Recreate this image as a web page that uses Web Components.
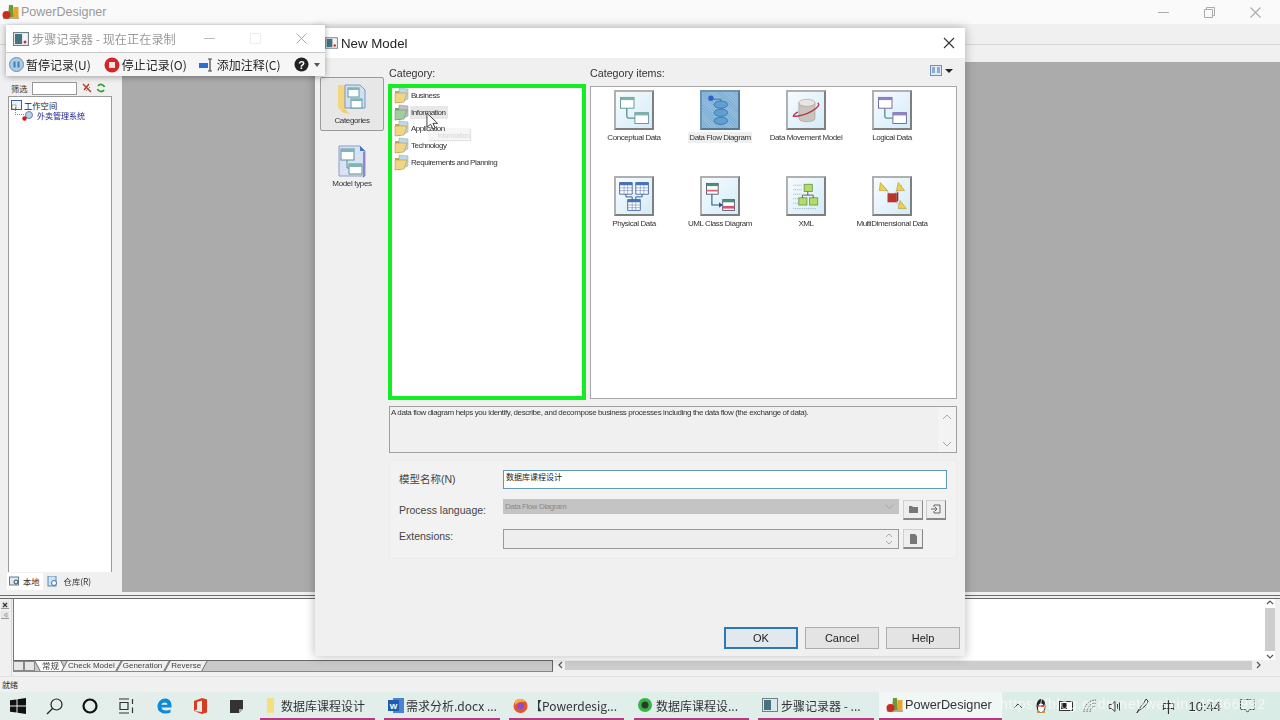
<!DOCTYPE html>
<html lang="zh"><head><meta charset="utf-8"><title>PowerDesigner</title>
<style>
html,body{margin:0;padding:0;width:1280px;height:720px;overflow:hidden;background:#f0f0f0}
body{font-family:"Liberation Sans","Noto Sans CJK SC",sans-serif;color:#222}
</style></head><body>
<x-app>
  <x-recorder slot="windows"></x-recorder>
  <x-dialog slot="windows"></x-dialog>
</x-app>
<script>
const PD=`<svg width="18" height="16" viewBox="0 0 18 16"><path d="M7 1h4l1 12H6z" fill="#6c9a3a"/><rect x="11.500" y="3" width="5" height="10" fill="#e8a52a"/><circle cx="4.500" cy="11" r="4" fill="#cf2a22"/><path d="M1 14h16" stroke="#8a5a2a"/></svg>`;
const REC=`<svg width="16" height="14" viewBox="0 0 16 14"><rect x=".5" y=".5" width="15" height="13" fill="#dfe6ea" stroke="#6f8088"/><rect x="2" y="2" width="7" height="10" fill="#47737f"/><rect x="10" y="2" width="4" height="10" fill="#f4f6f7"/><circle cx="12" cy="10" r="1.500" fill="#c9303a"/></svg>`;
const FOLDER=`<svg width="15" height="17" viewBox="0 0 15 17"><path d="M1 4h4l1 1v11H2a1 1 0 0 1-1-1z" fill="#c9a94f"/><path d="M5 1l9 1v10l-9 4z" fill="#bcd8ea" stroke="#8aa0ad" stroke-width=".5"/><path d="M1 6l12 0-3 9-9 1z" fill="#f0d684" stroke="#b79a45" stroke-width=".6"/></svg>`;

function def(name,css,html){
  customElements.define(name,class extends HTMLElement{
    constructor(){super();const r=this.attachShadow({mode:'open'});
      r.innerHTML=`<style>${css}</style>${typeof html==='function'?html(this):html}`;}
  });
}

/* ---------- model tile ---------- */
const TILES={
 concept:`<rect x="5" y="6" width="15" height="12" fill="#fff" stroke="#5f8f93"/><rect x="5" y="6" width="15" height="3" fill="#79b6a8"/><rect x="21" y="23" width="15" height="12" fill="#fff" stroke="#5f8f93"/><rect x="21" y="23" width="15" height="3" fill="#79b6a8"/><path d="M12 18v9q0 2 2 2h7" fill="none" stroke="#5f8f93" stroke-width="1.500"/>`,
 flow:`<circle cx="10" cy="7" r="3" fill="#2f62c9"/><path d="M13 8h8M21 8v5M21 18v5M21 28v3" stroke="#3b6d99"/><ellipse cx="21" cy="14" rx="7.500" ry="4" fill="#5f9fd4" stroke="#3a76a8"/><ellipse cx="21" cy="23" rx="7.500" ry="4" fill="#5f9fd4" stroke="#3a76a8"/><ellipse cx="21" cy="32" rx="7.500" ry="4" fill="#5f9fd4" stroke="#3a76a8"/>`,
 move:`<path d="M12 12v17q0 4 9 4t9-4V12z" fill="#c9c4bd" stroke="#8c8782" stroke-width=".5"/><ellipse cx="21" cy="12" rx="9" ry="4" fill="#e8e6e2" stroke="#8c8782" stroke-width=".5"/><path d="M33 12q4 3-6 9T6 27q0-2 5-5" fill="none" stroke="#b8384c" stroke-width="1.500"/>`,
 logical:`<rect x="5" y="6" width="15" height="12" fill="#fff" stroke="#6a5fa3"/><rect x="5" y="6" width="15" height="3" fill="#8f81c9"/><rect x="21" y="23" width="15" height="12" fill="#fff" stroke="#6a5fa3"/><rect x="21" y="23" width="15" height="3" fill="#8f81c9"/><path d="M12 18v9q0 2 2 2h7" fill="none" stroke="#5f8f93" stroke-width="1.500"/>`,
 physical:`<g fill="#fff" stroke="#44639e"><path d="M4 5h14v13H4zM22 5h14v13H22zM13 24h14v12H13z"/><path d="M4 11h14M4 14h14M9 8v10M13 8v10M22 11h14M22 14h14M27 8v10M31 8v10M13 30h14M13 33h14M18 27v9M22 27v9" stroke-width=".5"/></g><path d="M4 5h14v3H4zM22 5h14v3H22zM13 24h14v3H13z" fill="#4b72b4"/><path d="M11 18v3h7v3M29 18v3h-7v3" fill="none" stroke="#2d4f83"/>`,
 uml:`<rect x="5" y="6" width="13" height="12" fill="#fff" stroke="#556"/><rect x="5" y="6" width="13" height="3" fill="#4a8f77"/><rect x="5" y="13" width="13" height="2" fill="#e0666a"/><rect x="23" y="24" width="13" height="12" fill="#fff" stroke="#556"/><rect x="23" y="24" width="13" height="3" fill="#4a8f77"/><rect x="23" y="31" width="13" height="3" fill="#d9506a"/><path d="M11 18v12h11" fill="none" stroke="#1e5a8a" stroke-width="1.200"/><path d="M19 27l4 3-4 3z" fill="#1e5a8a"/>`,
 xml:`<g stroke="#9aa" stroke-width="1" stroke-dasharray="1 1"><path d="M6 8h9M6 13h9M6 18h9M6 23h5M6 28h5M6 34h25"/></g><g fill="#b5dc6a" stroke="#6f9c47"><rect x="18" y="7" width="9" height="8"/><rect x="12" y="22" width="9" height="8"/><rect x="24" y="22" width="9" height="8"/></g><path d="M22 15v4M16 22v-3h12v3" fill="none" stroke="#555"/>`,
 multi:`<path d="M9 8l11 13L31 8M20 21l11 12" stroke="#d8c8c4" stroke-width="1.500" fill="none"/><path d="M7 5l8 9H6zM27 5l7 9h-9zM29 25l7 9h-9z" fill="#f0cf4a" stroke="#a88d2c" stroke-width=".6"/><rect x="15" y="17" width="10" height="10" fill="#b8342c"/><path d="M25 17l2-2v10l-2 2z" fill="#8c2a24"/>`
};
def('x-model-tile',`
:host{display:flex;flex-direction:column;align-items:center;width:86px;height:86px;box-sizing:border-box;padding-top:3px;font:8px "Liberation Sans",sans-serif;letter-spacing:-.42px;color:#333}
.ic{width:40px;height:40px;box-sizing:border-box;border:2px solid;border-color:#b0b0b0 #7f7f7f #7f7f7f #b0b0b0;background:linear-gradient(135deg,#f7fcfe,#d4ebf8);flex:none}
:host([selected]) .ic{background:repeating-linear-gradient(45deg,#7fb0d6 0 1px,#93bddd 1px 2px);border-color:#6d93b3 #56799a #56799a #6d93b3}
svg{display:block;width:36px;height:36px}
.t{margin-top:2px;padding:0 1px;white-space:nowrap;height:11px;line-height:11px}
:host([selected]) .t{background:#efefef}
`,el=>`<div class="ic"><svg viewBox="0 0 40 40">${TILES[el.getAttribute('icon')]}</svg></div><div class="t"><slot></slot></div>`);

/* ---------- category row ---------- */
def('x-cat-row',`
:host{display:flex;align-items:center;position:relative;height:16.700px;font:8px "Liberation Sans",sans-serif;letter-spacing:-.5px;color:#333;gap:1px}
.lb{padding:2px 1px;white-space:nowrap}
svg{display:block;flex:none}
:host([hover]) .lb{background:#e8e8e8;padding-right:2px}
:host([hover]) svg{filter:hue-rotate(60deg) saturate(.6) brightness(.9)}
`,`${FOLDER}<span class="lb"><slot></slot></span>`);

/* ---------- push button ---------- */
def('x-button',`
:host{display:inline-flex;align-items:center;justify-content:center;box-sizing:border-box;width:74px;height:22px;background:#e4e4e4;border:1px solid #adadad;font:11px "Liberation Sans",sans-serif;color:#222}
:host([primary]){border:2px solid #2d79b6;background:#e1e8ee}
`,`<slot></slot>`);

def('x-mini',`
:host{display:flex;align-items:center;justify-content:center;box-sizing:border-box;flex:none;width:20px;height:20px;background:#eee;border:1px solid #cfcfcf;border-right-color:#888;border-bottom:2px solid #888}
`,`<slot></slot>`);

/* ---------- dialog ---------- */
const FOLD_BIG=`<svg width="34" height="34" viewBox="0 0 34 34"><path d="M3 3h5l2 2v26l-5-3q-2-2-2-4z" fill="#f1d77f"/><path d="M10 3h15l5 5v18H10z" fill="#cfe0f2" stroke="#7f95c8"/><g fill="#fff" stroke="#5f9aa0"><rect x="13" y="6" width="11" height="9"/><rect x="16" y="17" width="11" height="9"/></g><path d="M13 6h11v2H13zM16 17h11v2H16z" fill="#7db8b0"/><path d="M9 26l6 6-9-2z" fill="#f0d070"/></svg>`;
const DOC_BIG=`<svg width="30" height="36" viewBox="0 0 30 36"><path d="M2 3h21l5 5v25H2z" fill="#d8e2f4" stroke="#8c9ccc"/><path d="M23 3l5 5h-5z" fill="#3c7ad0"/><path d="M28 8v25l-2 2V9z" fill="#8f88c4"/><g fill="#fff" stroke="#5f8f93"><rect x="4" y="6" width="13" height="11"/><rect x="12" y="21" width="13" height="10"/></g><path d="M4 6h13v3H4zM12 21h13v3H12z" fill="#7db8b0"/><path d="M10 17v8h2" stroke="#5f8f93" fill="none"/></svg>`;
def('x-dialog',`
:host{position:absolute;left:315px;top:28px;width:650px;height:628px;background:#f0f0f0;box-shadow:0 0 10px rgba(0,0,0,.28);display:flex;flex-direction:column;font:10.700px "Liberation Sans","Noto Sans CJK SC",sans-serif;color:#333}
.title{height:30px;background:#fff;display:flex;align-items:center;padding-left:10px;flex:none;font-size:13.300px;color:#222}
.title svg.ic{width:13px;height:12px}
.title .name{margin-left:3px}
.title svg.x{margin-left:auto;margin-right:10px}
.top{display:flex;height:334px;padding-top:8px;flex:none}
.side{width:64px;margin-left:5px;flex:none;display:flex;flex-direction:column;gap:11px;padding-top:11px;font:8px "Liberation Sans",sans-serif;letter-spacing:-.35px;color:#333}
.tab{display:flex;flex-direction:column;align-items:center;box-sizing:border-box;height:54px}
.tab.on{background:#e7e7e7;border:1px solid #9a9a9a;border-radius:2px;padding-top:4px}
.tab.off{height:46px;padding-top:1px}
.col1{width:198px;margin-left:4px;flex:none;display:flex;flex-direction:column}
.col1 .lab{padding-left:1px}
.col2{width:367px;margin-left:4px;flex:none;display:flex;flex-direction:column}
.lab{height:18px;line-height:14px;display:flex;align-items:flex-start;justify-content:space-between}
.cats{box-sizing:border-box;height:316px;border:4px solid #12ee22;background:#fff;padding:0 0 0 2px;position:relative}
.rows{margin-top:-1px}
.items{box-sizing:border-box;height:313px;margin-top:2px;border:1px solid #a8a8a8;background:#fff;display:grid;grid-template-columns:repeat(4,86px);grid-auto-rows:86px;align-content:start}
.tip{position:absolute;left:36px;top:40px;width:42px;height:12px;box-sizing:border-box;padding-top:4px;text-align:right;font:6.500px "Liberation Sans",sans-serif;color:#d4d4d4;background:#f6f6f6;box-shadow:1px 1px 1px #e2e2e2}
.cursor{position:absolute;left:34px;top:24px}
.view{display:flex;align-items:center;gap:3px;margin-right:4px;margin-top:-1px}
.caret{width:0;height:0;border:4px solid transparent;border-top:4px solid #222;border-bottom:0}
.desc{margin:6px 8px 0 74px;height:47px;box-sizing:border-box;border:1px solid #a0a0a0;display:flex;justify-content:space-between;font:8px "Liberation Sans",sans-serif;letter-spacing:-.39px;color:#333;padding:1px 0 0 1px;flex:none}
.sb{width:18px;margin-top:-1px;display:flex;flex-direction:column;justify-content:space-between;align-items:center;padding:7px 0 5px;background:#f3f3f3}
.form{margin:7px 8px 0 74px;height:99px;box-sizing:border-box;background:#f2f2f2;border:1px solid #ececec;padding:9px 9px 0 9px;display:flex;flex-direction:column;flex:none}
.row{display:flex;align-items:center}
.row label{width:104px;flex:none;font-size:10.500px;color:#444}
.input{box-sizing:border-box;width:445px;height:19px;border:1px solid #5d9ab8;background:#fff;font:8px "Liberation Sans","Noto Sans CJK SC",sans-serif;color:#222;padding:1px 2px;line-height:11px}
.sel{box-sizing:border-box;width:396px;height:15px;margin-bottom:7px;background:#c4c4c4;font:8px "Liberation Sans",sans-serif;letter-spacing:-.42px;color:#8a8a8a;display:flex;align-items:center;justify-content:space-between;padding:0 5px 0 2px}
.ext{box-sizing:border-box;width:396px;height:20px;border:1px solid #9a9a9a;background:#eee;display:flex;justify-content:flex-end;align-items:center;padding-right:5px}
.foot{display:flex;justify-content:flex-end;gap:7px;padding-right:5px;margin-top:auto;margin-bottom:7px}
`,`
<div class="title">${REC.replace('<svg ','<svg class="ic" ')}<span class="name">New Model</span><svg class="x" width="12" height="12" viewBox="0 0 12 12"><path d="M1 1l10 10M11 1L1 11" stroke="#333" stroke-width="1.100"/></svg></div>
<div class="top">
 <div class="side">
  <div class="tab on">${FOLD_BIG}<span>Categories</span></div>
  <div class="tab off">${DOC_BIG}<span>Model types</span></div>
 </div>
 <div class="col1"><div class="lab">Category:</div>
  <div class="cats">
   <div class="tip">Information</div>
   <div class="rows"><x-cat-row>Business</x-cat-row><x-cat-row hover>Information</x-cat-row><x-cat-row>Application</x-cat-row><x-cat-row>Technology</x-cat-row><x-cat-row>Requirements and Planning</x-cat-row></div>
   <svg class="cursor" width="13" height="19" viewBox="0 0 14 20"><path d="M1 1v15l4-3 2.500 5 2.500-1-2.500-5h5z" fill="#fff" stroke="#333"/></svg>
  </div></div>
 <div class="col2"><div class="lab"><span>Category items:</span><span class="view"><svg width="12" height="11" viewBox="0 0 12 11"><rect x=".5" y=".5" width="11" height="10" fill="#dfeaf6" stroke="#6d8fc0"/><path d="M2 3h3M2 5h3M2 7h3M7 3h3M7 5h3M7 7h3" stroke="#3f6fb0"/></svg><span class="caret"></span></span></div>
  <div class="items">
   <x-model-tile icon="concept">Conceptual Data</x-model-tile>
   <x-model-tile icon="flow" selected>Data Flow Diagram</x-model-tile>
   <x-model-tile icon="move">Data Movement Model</x-model-tile>
   <x-model-tile icon="logical">Logical Data</x-model-tile>
   <x-model-tile icon="physical">Physical Data</x-model-tile>
   <x-model-tile icon="uml">UML Class Diagram</x-model-tile>
   <x-model-tile icon="xml">XML</x-model-tile>
   <x-model-tile icon="multi">MultiDimensional Data</x-model-tile>
  </div></div>
</div>
<div class="desc"><span>A data flow diagram helps you identify, describe, and decompose business processes including the data flow (the exchange of data).</span>
 <span class="sb"><svg width="10" height="6" viewBox="0 0 10 6"><path d="M1 5l4-4 4 4" fill="none" stroke="#a8a8a8"/></svg><svg width="10" height="6" viewBox="0 0 10 6"><path d="M1 1l4 4 4-4" fill="none" stroke="#a8a8a8"/></svg></span></div>
<div class="form">
 <div class="row"><label style="margin-top:-2px">模型名称(N)</label><div class="input">数据库课程设计</div></div>
 <div class="row" style="margin-top:10px;height:21px"><label>Process language:</label><div class="sel"><span>Data Flow Diagram</span><svg width="9" height="5" viewBox="0 0 9 5"><path d="M.5 .5l4 4 4-4" fill="none" stroke="#a9a9a9"/></svg></div>
   <x-mini style="margin-left:4px"><svg width="9" height="8" viewBox="0 0 9 8"><path d="M0 1h3l1 1h5v6H0z" fill="#777"/></svg></x-mini>
   <x-mini style="margin-left:3px"><svg width="10" height="10" viewBox="0 0 10 10"><path d="M3 3V1h6v8H3V7M0 5h5M4 3l2 2-2 2" fill="none" stroke="#666"/></svg></x-mini></div>
 <div class="row" style="margin-top:9px"><label style="margin-top:-6px">Extensions:</label><div class="ext"><svg width="8" height="14" viewBox="0 0 8 14"><path d="M1 5l3-3 3 3M1 9l3 3 3-3" fill="none" stroke="#aaa"/></svg></div>
   <x-mini style="margin-left:4px"><svg width="9" height="10" viewBox="0 0 9 10"><path d="M1 0h5l2 2v8H1z" fill="#777"/></svg></x-mini></div>
</div>
<div class="foot"><x-button primary>OK</x-button><x-button>Cancel</x-button><x-button>Help</x-button></div>
`);

/* ---------- steps recorder ---------- */
def('x-recorder',`
:host{position:absolute;left:6px;top:25px;width:319px;height:51px;background:#fff;box-shadow:0 1px 6px rgba(0,0,0,.35);display:flex;flex-direction:column;font:12px "Noto Sans CJK SC","Liberation Sans",sans-serif;color:#222;z-index:2}
.t{height:28px;flex:none;display:flex;align-items:center;padding-left:7px;color:#9a9a9a;font-size:12.200px;border-bottom:1px solid #c8c8c8;box-sizing:border-box}
.t span{margin-left:3px}
.ctl{margin-left:auto;display:flex;align-items:center;gap:35px;padding-right:18px}
.b{flex:1;display:flex;align-items:center;padding-left:3px;background:#f6f6f6}
.i{display:flex;align-items:center;gap:2px;white-space:nowrap}
.caret{width:0;height:0;border:3.500px solid transparent;border-top:4px solid #555;border-bottom:0;margin-left:3px}
`,`
<div class="t">${REC}<span>步骤记录器 - 现在正在录制</span>
 <div class="ctl"><svg width="11" height="11"><path d="M0 5.500h11" stroke="#bbb"/></svg><svg width="11" height="11"><rect x=".5" y=".5" width="10" height="10" fill="none" stroke="#eee"/></svg><svg width="11" height="11"><path d="M.5 .5l10 10M10.500 .5l-10 10" stroke="#aaa"/></svg></div></div>
<div class="b">
 <span class="i"><svg width="15" height="15" viewBox="0 0 15 15"><circle cx="7.500" cy="7.500" r="7" fill="#a9cce8" stroke="#6f8fa8"/><path d="M5.500 4.500v6M9.500 4.500v6" stroke="#3f7fb5" stroke-width="2"/></svg>暂停记录(U)</span>
 <span class="i" style="margin-left:13px"><svg width="16" height="16" viewBox="0 0 16 16"><circle cx="8" cy="8" r="7.500" fill="#d3262a"/><rect x="5" y="5" width="6" height="6" fill="#f3e3e3"/></svg>停止记录(O)</span>
 <span class="i" style="margin-left:12px"><svg width="16" height="14" viewBox="0 0 16 14"><rect x="0" y="5" width="9" height="5" fill="#2c6fd0"/><path d="M11 1v12M9 1h4M9 13h4" stroke="#444" stroke-width="1.200" fill="none"/></svg>添加注释(C)</span>
 <span class="i" style="margin-left:13px"><svg width="15" height="15" viewBox="0 0 15 15"><circle cx="7.500" cy="7.500" r="7" fill="#222"/><text x="7.500" y="11.500" text-anchor="middle" font-size="11" font-weight="700" font-family="Liberation Sans" fill="#fff">?</text></svg><span class="caret"></span></span>
</div>`);

/* ---------- explorer ---------- */
def('x-explorer',`
:host{display:flex;flex-direction:column;width:122px;flex:none;background:#f0f0f0;box-sizing:border-box;padding:18px 10px 0 8px;font:8.300px "Noto Sans CJK SC","Liberation Sans",sans-serif;color:#333}
.f{display:flex;align-items:center;height:16px;gap:4px;padding-left:3px}
.f i{display:block;box-sizing:border-box;width:45px;height:13px;border:1px solid #999;background:#fff}
.tree{flex:1;background:#fff;border:1px solid #9a9a9a;border-bottom:0;padding:2px 0 0 2px}
.r{display:flex;align-items:center;height:11px;gap:2px;color:#222}
.r.c{margin-left:11px;gap:4px;color:#21218a;position:relative;font-size:8px}
.r.c::before{content:"";position:absolute;left:-7px;top:-3px;width:8px;height:7px;border:dotted #888;border-width:0 0 1px 1px}
.tabs{height:18px;display:flex;align-items:center;flex:none;margin-left:-1px;margin-bottom:2px}
.tb{display:flex;align-items:center;gap:3px;padding:0 3px 0 2px;height:17px}
.tb.on{background:#fff}
.tb.re{gap:6px;margin-left:2px}
`,`
<div class="f">筛选<i></i><svg style="margin-left:1px" width="10" height="10" viewBox="0 0 10 10"><path d="M1 1l8 8M7 1L2 7" stroke="#c23b2a" stroke-width="1.500"/><path d="M4 8l4-4" stroke="#888"/></svg><svg width="10" height="10" viewBox="0 0 10 10"><path d="M8.500 4A3.700 3.700 0 0 0 2 3M1.500 6A3.700 3.700 0 0 0 8 7" fill="none" stroke="#3a9a3a" stroke-width="1.800"/></svg></div>
<div class="tree">
 <div class="r"><svg width="11" height="10" viewBox="0 0 11 10"><rect x=".5" y=".5" width="10" height="9" fill="#eef4fb" stroke="#3560a8"/><rect x="1" y="5" width="4" height="4" fill="#fff" stroke="#555" stroke-width=".5"/></svg>工作空间</div>
 <div class="r c"><svg width="11" height="10" viewBox="0 0 11 10"><circle cx="7" cy="4" r="3.500" fill="#b7d2e8" stroke="#5f8aa8"/><circle cx="2.500" cy="7.500" r="2.200" fill="#d4151c"/></svg>外卖管理系统</div>
</div>
<div class="tabs"><span class="tb on"><svg width="11" height="10" viewBox="0 0 11 10"><rect x=".5" y="1" width="9" height="8" fill="#dcecf5" stroke="#5b7f97"/><circle cx="7" cy="6" r="2" fill="none" stroke="#444"/></svg>本地</span><span class="tb re"><svg width="11" height="11" viewBox="0 0 11 11"><rect x="1" y="0" width="8" height="10" fill="#cfe2f3" stroke="#5b8ab0"/><circle cx="7" cy="7" r="2.500" fill="#fff" stroke="#3f6f9a"/></svg>仓库(R)</span></div>
`);

/* ---------- titlebar ---------- */
def('x-titlebar',`
:host{display:flex;align-items:center;height:24px;flex:none;background:#fafafa;padding-left:2px;font:12.500px "Liberation Sans",sans-serif;color:#999}
span{margin-left:1px}
.c{margin-left:auto;display:flex;align-items:center;gap:35px;padding-right:19px}
`,`${PD}<span>PowerDesigner</span><div class="c"><svg width="11" height="11"><path d="M0 5.500h11" stroke="#aaa"/></svg><svg width="11" height="11"><path d="M.5 2.500h8v8h-8zM2.500 2.500v-2h8v8h-2" fill="none" stroke="#aaa"/></svg><svg width="11" height="11"><path d="M.5 .5l10 10M10.500 .5l-10 10" stroke="#aaa" stroke-width="1.100"/></svg></div>`);

/* ---------- output ---------- */
def('x-output',`
:host{display:flex;flex-direction:column;height:84px;flex:none;background:#f0f0f0;font:8px "Liberation Sans","Noto Sans CJK SC",sans-serif;color:#444}
.sash{height:7px;flex:none;border-bottom:1px solid #6a6a6a;position:relative;box-sizing:border-box}
.sash::before{content:"";position:absolute;left:0;right:0;top:3px;border-top:1px solid #6a6a6a}
.main{flex:1;display:flex;min-height:0}
.left{width:13px;flex:none;display:flex;flex-direction:column;align-items:center;padding-top:2px;gap:2px;box-sizing:border-box;border-right:1px solid #d8d8d8;margin-left:-1px}
.left i{display:flex;align-items:center;justify-content:center;width:8px;height:8px;background:#e6e6e6;border-bottom:1px solid #999;box-sizing:border-box}
.body{flex:1;display:flex;flex-direction:column;padding-right:5px;margin-left:1px}
.up{flex:1;display:flex;min-height:0}
.white{flex:1;background:#fff;border-left:1px solid #777}
.vs{width:10px;flex:none;background:#fff;display:flex;flex-direction:column;align-items:center;justify-content:space-between;padding:1px 0}
.vs b{display:block;flex:1;width:10px;margin:3px 0;background:#cdcdcd}
.down{height:16px;flex:none;display:flex;align-items:flex-start}
.tabs{width:540px;height:12px;flex:none;background:#c9c9c9;display:flex;align-items:center;border-top:1px solid #666;border-bottom:1px solid #888;box-sizing:border-box;border-right:1px solid #666}
.tabs s{display:block;width:11px;height:10px;background:#e6e6e6;border:1px solid #888;box-sizing:border-box;flex:none;text-decoration:none}
.tabs u{display:block;position:relative;text-decoration:none;height:10px;line-height:10px;padding:0 4px;white-space:nowrap;z-index:1}
.tabs u::before{content:"";position:absolute;inset:0;background:#f0f0f0;transform:skewX(-28deg);border-left:1px solid #666;border-right:1px solid #666;z-index:-1}
.tabs u.on::before{background:#fff;transform:skewX(28deg)}
.hs{flex:1;height:10px;background:#f0f0f0;display:flex;align-items:center}
.hs b{flex:1;height:9px;background:#cdcdcd;margin:0 4px 0 2px}
`,`
<div class="sash"></div>
<div class="main">
 <div class="left"><i><svg width="6" height="6" viewBox="0 0 6 6"><path d="M1 1l4 4M5 1L1 5" stroke="#333" stroke-width="1.200"/></svg></i><i><svg width="5" height="6" viewBox="0 0 5 6"><path d="M4 1L1 3l3 2z" fill="none" stroke="#999" stroke-width=".8"/></svg></i></div>
 <div class="body">
  <div class="up"><div class="white"></div><div class="vs"><svg width="8" height="5" viewBox="0 0 8 5"><path d="M1 4l3-3 3 3" fill="none" stroke="#555" stroke-width="1.200"/></svg><b></b><svg width="8" height="5" viewBox="0 0 8 5"><path d="M1 1l3 3 3-3" fill="none" stroke="#555" stroke-width="1.200"/></svg></div></div>
  <div class="down">
   <div class="tabs"><s></s><s></s><u class="on" style="margin-left:2px;font-size:8.500px;padding:0 5px">常规</u><u>Check Model</u><u style="margin-left:0">Generation</u><u style="margin-left:1px">Reverse</u></div>
   <div class="hs"><svg style="margin-left:5px" width="5" height="8" viewBox="0 0 5 8"><path d="M4 1L1 4l3 3" fill="none" stroke="#555" stroke-width="1.200"/></svg><b></b><svg style="margin-right:14px" width="5" height="8" viewBox="0 0 5 8"><path d="M1 1l3 3-3 3" fill="none" stroke="#555" stroke-width="1.200"/></svg></div>
  </div>
 </div>
</div>`);

/* ---------- taskbar ---------- */
def('x-task',`
:host{display:flex;align-items:center;box-sizing:border-box;height:28px;border-bottom:2px solid #b33b80;padding-left:3px;gap:4px;font:12px "Noto Sans CJK SC","Liberation Sans",sans-serif;color:#333;white-space:nowrap;flex:none}
:host([active]){background:#f0f7f4}
`,`<slot name="i"></slot><slot></slot>`);
def('x-taskbar',`
:host{display:flex;align-items:center;height:28px;flex:none;background:linear-gradient(90deg,#e4eeeb 0%,#e0eeea 60%,#d9ece5 100%);position:relative}
.starts{display:flex;align-items:center;width:260px;flex:none;height:100%}
.s{width:36px;display:flex;justify-content:center;flex:none}
.tasks{display:flex;align-items:center;height:100%}
.tray{display:flex;align-items:center;margin-left:auto;height:100%;font:13px "Noto Sans CJK SC","Liberation Sans",sans-serif;color:#333;padding-right:24px}
.wm{position:absolute;left:1000px;top:4px;font:14px "Liberation Sans",sans-serif;color:rgba(255,255,255,.65);white-space:nowrap;letter-spacing:.75px}
`,`
<div class="starts">
 <div class="s"><svg width="16" height="16" viewBox="0 0 16 16"><path d="M0 2.300l6.500-.9v6.200H0zM7.500 1.300L16 0v7.600H7.500zM0 8.500h6.500v6.100L0 13.700zM7.500 8.500H16V16l-8.500-1.200z" fill="#111"/></svg></div>
 <div class="s"><svg width="17" height="17" viewBox="0 0 17 17"><circle cx="10.500" cy="6.500" r="5.500" fill="none" stroke="#222" stroke-width="1.200"/><path d="M6.500 10.500L1 16" stroke="#222" stroke-width="1.300"/></svg></div>
 <div class="s"><svg width="16" height="16" viewBox="0 0 16 16"><circle cx="8" cy="8" r="6.500" fill="none" stroke="#111" stroke-width="2.200"/></svg></div>
 <div class="s"><svg width="17" height="16" viewBox="0 0 17 16"><path d="M1 1h10M1 15h10M2 4.500h8v7H2zM14.500 1v5M14.500 9.500v5.500" fill="none" stroke="#333" stroke-width="1.200"/></svg></div>
 <div class="s" style="margin-left:2px"><svg width="15" height="16" viewBox="0 0 15 16"><path d="M14.500 9.500H4.500c.2 2.700 4.500 4 9 2v3c-5 2.300-13 1-13-6 0-5 4-8 7.500-8s6.500 2.500 6.500 7zM4.500 6.800h6c0-3-5.500-3-6 0z" fill="#0f8ad8"/></svg></div>
 <div class="s"><svg width="13" height="16" viewBox="0 0 13 16"><path d="M0 3l8-3 5 1.500v13L8 16l-8-3 8 1V2.500L3 4v7.500L0 13z" fill="#d83b1f"/></svg></div>
 <div class="s"><svg width="13" height="13" viewBox="0 0 13 13"><path d="M0 0h13v9l-4 4H0z" fill="#333"/><path d="M9 13V9h4z" fill="#aaa"/></svg></div>
</div>
<div class="tasks">
 <x-task style="width:115px;margin-right:9px;padding-left:6px;gap:6px"><svg slot="i" width="9" height="17" viewBox="0 0 9 17"><rect x="1" y="1" width="7" height="15" fill="#f6e07e"/></svg>数据库课程设计</x-task>
 <x-task style="width:116px;margin-right:9px;padding-left:4px;gap:2px"><svg slot="i" width="16" height="15" viewBox="0 0 16 15"><rect x="5" y="0" width="11" height="15" fill="#4a83d6"/><rect x="0" y="2" width="11" height="11" fill="#1f5bb0"/><text x="5.500" y="11" text-anchor="middle" font-size="8" font-weight="700" font-family="Liberation Sans" fill="#fff">W</text></svg>需求分析.docx ...</x-task>
 <x-task style="width:115px;margin-right:10px;padding-left:4px;gap:8px"><svg slot="i" width="15" height="15" viewBox="0 0 15 15"><circle cx="7.500" cy="8" r="7" fill="#e8562a"/><circle cx="7.500" cy="8" r="3.500" fill="#8a4fd0"/><path d="M2 3c3-3 8-3 11 1-3-1-7-1-11 3z" fill="#f5b13d"/></svg><span style="margin-left:-6px">【Powerdesig...</span></x-task>
 <x-task style="width:115px;margin-right:9px;padding-left:4px"><svg slot="i" width="14" height="14" viewBox="0 0 14 14"><circle cx="7" cy="7" r="7" fill="#37b34a"/><circle cx="7" cy="7" r="3.500" fill="#2a3a2a"/></svg>数据库课程设...</x-task>
 <x-task style="width:116px;margin-right:5px;padding-left:4px;gap:3px"><svg slot="i" width="16" height="14" viewBox="0 0 16 14"><rect x=".5" y=".5" width="15" height="13" fill="#dfe6ea" stroke="#6f8088"/><rect x="2" y="2" width="7" height="10" fill="#47737f"/></svg>步骤记录器 - ...</x-task>
 <x-task active style="width:123px;padding-left:7px;gap:1px;font-family:'Liberation Sans',sans-serif;font-size:12.700px"><span slot="i" style="display:block;height:16px">${PD}</span>PowerDesigner</x-task>
</div>
<div class="tray">
 <svg width="10" height="6" viewBox="0 0 10 6" style="margin-right:12px"><path d="M1 5l4-4 4 4" fill="none" stroke="#333"/></svg>
 <svg width="12" height="16" viewBox="0 0 12 16" style="margin-right:12px"><ellipse cx="6" cy="8" rx="4.500" ry="7" fill="#222"/><ellipse cx="6" cy="10" rx="3" ry="4.500" fill="#fff"/><path d="M2 14h3M7 14h3" stroke="#e88a1a" stroke-width="2"/><path d="M2 8h8" stroke="#d9261c" stroke-width="1.500"/></svg>
 <svg width="14" height="10" viewBox="0 0 14 10" style="margin-right:10px"><rect x=".5" y=".5" width="13" height="9" fill="#fff" stroke="#333"/><rect x="2" y="2" width="6" height="6" fill="#222"/></svg>
 <svg width="14" height="14" viewBox="0 0 14 14" style="margin-right:10.500px"><path d="M1 13a12 12 0 0 1 12-12M4 13a9 9 0 0 1 9-9M7 13a6 6 0 0 1 6-6" fill="none" stroke="#555" stroke-dasharray="1.500 1"/></svg>
 <svg width="13" height="13" viewBox="0 0 13 13" style="margin-right:15px"><path d="M1 4.500h2.500L7 1.500v10L3.500 8.500H1zM9.500 4v5M11.500 2.500v8" fill="none" stroke="#444"/></svg>
 <svg width="13" height="16" viewBox="0 0 13 16" style="margin-right:12.500px"><path d="M1 15c2-5 4-6 6-9l3-5 2 2c-1 4-4 6-7 8s-3 2-4 4z" fill="none" stroke="#333"/></svg>
 <span style="margin-right:13px;font-size:14px">中</span>
 <span style="margin-right:18px;font-family:'Liberation Sans',sans-serif;font-size:13px">10:44</span>
 <svg width="17" height="16" viewBox="0 0 17 16"><path d="M1.500 1.500h14v10h-5l-2 3-2-3h-5z" fill="none" stroke="#444" stroke-dasharray="2 1"/></svg>
</div>
<div class="wm">https://blog.csdn.net/weixin_43366992</div>
`);

/* ---------- app shell ---------- */
def('x-app',`
:host{display:flex;flex-direction:column;position:relative;width:1280px;height:720px;overflow:hidden;filter:blur(.35px)}
.bars{height:38px;flex:none;background:#f0f0f0;box-sizing:border-box}
.menu{height:21px;border-bottom:1px solid #d6d6d6;box-sizing:border-box}
.mid{flex:1;display:flex;min-height:0}
.work{flex:1;background:#ababab}
.status{height:16px;flex:none;background:#f0f0f0;font:8px "Noto Sans CJK SC",sans-serif;color:#333;padding-left:2px;line-height:16px;border-top:1px solid #e2e2e2;box-sizing:border-box}
`,`
<x-titlebar></x-titlebar>
<div class="bars"><div class="menu"></div></div>
<div class="mid"><x-explorer></x-explorer><div class="work"></div></div>
<x-output></x-output>
<div class="status">就绪</div>
<x-taskbar></x-taskbar>
<slot name="windows"></slot>
`);
</script>
</body></html>
